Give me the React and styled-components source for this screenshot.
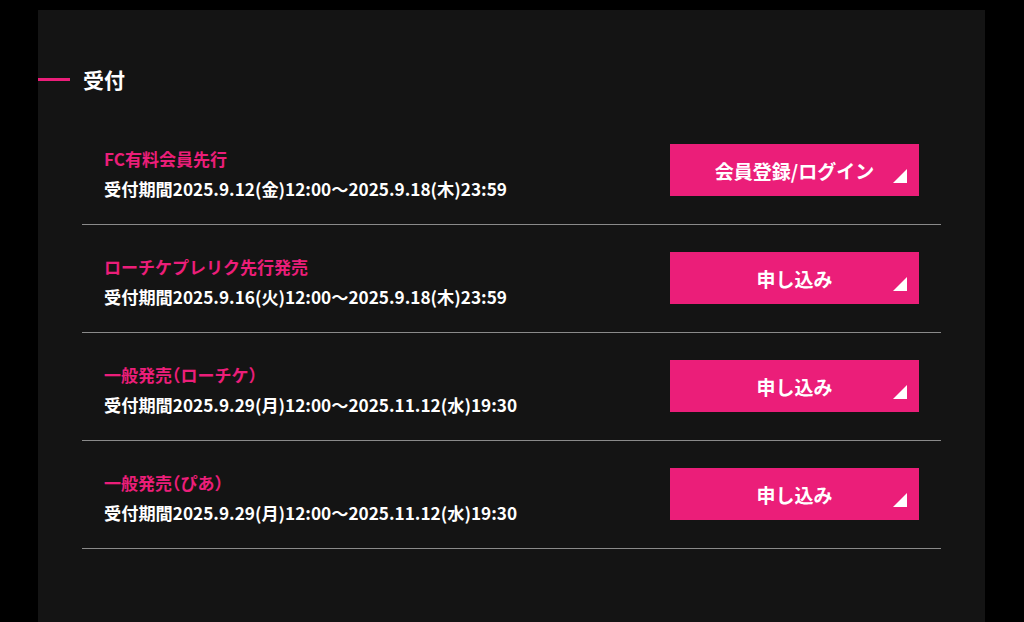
import React from "react";
import styled, { createGlobalStyle } from "styled-components";

const Global = createGlobalStyle`
  html, body { margin: 0; padding: 0; background: #000; }
  body { font-family: "Noto Sans CJK JP", "Noto Sans", sans-serif; color: #fff; }
  * { box-sizing: border-box; }
`;

const PINK = "#eb1e79";

const Panel = styled.section`
  margin: 10px 0 0 38px;
  width: 947px;
  min-height: 612px;
  background: #141414;
  padding-top: 54px;
`;

const Heading = styled.h2`
  margin: 0;
  display: flex;
  align-items: center;
  gap: 13px;
  height: 30px;
  font-size: 21px;
  font-weight: 700;
  line-height: 30px;
  color: #fff;
  &::before {
    content: "";
    display: block;
    width: 32px;
    height: 3px;
    background: ${PINK};
  }
`;

const List = styled.ul`
  list-style: none;
  margin: 23px 44px 0;
  padding: 0;
`;

const Row = styled.li`
  display: flex;
  align-items: flex-start;
  justify-content: space-between;
  padding: 27px 22px 28px;
  border-bottom: 1px solid #8a8a8a;
`;

const Info = styled.div`
  display: flex;
  flex-direction: column;
  gap: 12px;
  padding-top: 6px;
  margin-bottom: -4px;
`;

const Title = styled.div`
  font-size: 17px;
  font-weight: 700;
  line-height: 18px;
  color: ${PINK};
  white-space: nowrap;
`;

const Paren = styled.span`
  font-feature-settings: "halt";
`;

const Period = styled.div`
  font-size: 17.2px;
  font-weight: 700;
  line-height: 18px;
  color: #fff;
  white-space: nowrap;
`;

const Button = styled.a`
  position: relative;
  display: flex;
  align-items: center;
  justify-content: center;
  flex: none;
  width: 249px;
  height: 52px;
  background: ${PINK};
  color: #fff;
  font-size: 19px;
  font-weight: 700;
  text-decoration: none;
  &::after {
    content: "";
    position: absolute;
    right: 12px;
    bottom: 13px;
    width: 0;
    height: 0;
    border-style: solid;
    border-width: 0 0 14px 14px;
    border-color: transparent transparent #fff transparent;
  }
`;

const items = [
  { title: "FC有料会員先行", period: "受付期間2025.9.12(金)12:00～2025.9.18(木)23:59", btn: "会員登録/ログイン" },
  { title: "ローチケプレリク先行発売", period: "受付期間2025.9.16(火)12:00～2025.9.18(木)23:59", btn: "申し込み" },
  { title: "一般発売", sub: "ローチケ", period: "受付期間2025.9.29(月)12:00～2025.11.12(水)19:30", btn: "申し込み" },
  { title: "一般発売", sub: "ぴあ", period: "受付期間2025.9.29(月)12:00～2025.11.12(水)19:30", btn: "申し込み" },
];

export default function App() {
  return (
    <>
      <Global />
      <Panel>
        <Heading>受付</Heading>
        <List>
          {items.map((it, i) => (
            <Row key={i}>
              <Info>
                <Title>
                  {it.title}
                  {it.sub && (
                    <>
                      <Paren>（</Paren>
                      {it.sub}
                      <Paren>）</Paren>
                    </>
                  )}
                </Title>
                <Period>{it.period}</Period>
              </Info>
              <Button href="#">{it.btn}</Button>
            </Row>
          ))}
        </List>
      </Panel>
    </>
  );
}
